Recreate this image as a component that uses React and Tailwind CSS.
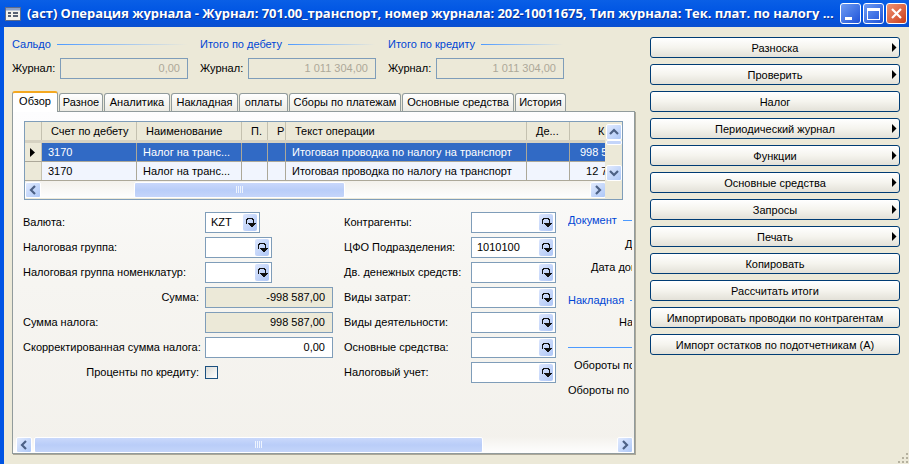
const font = { fontFamily: '"Liberation Sans", Arial, sans-serif' };

const Arrow = ({ dir }) => {
  const paths = {
    left: 'M9 3 L5 7 L9 11',
    right: 'M5 3 L9 7 L5 11',
    up: 'M3 9 L7 5 L11 9',
    down: 'M3 5 L7 9 L11 5',
  };
  return (
    <svg width="14" height="14" viewBox="0 0 14 14">
      <path d={paths[dir]} fill="none" stroke="#4d6185" strokeWidth="2.2" />
    </svg>
  );
};

const ScrollBtn = ({ dir }) => (
  <div className="flex h-[16px] w-[16px] shrink-0 items-center justify-center rounded-[2px] border border-white bg-gradient-to-br from-[#e1eafe] to-[#aec8f7]">
    <Arrow dir={dir} />
  </div>
);

const Grip = () => (
  <div className="flex gap-px">
    {[0, 1, 2, 3].map((i) => (
      <div key={i} className="h-[7px] w-px bg-[#eef4fe]" />
    ))}
  </div>
);

const HScroll = ({ leftGap, thumb, after, className = '' }) => (
  <div className={`flex h-[17px] shrink-0 items-center bg-gradient-to-b from-[#f3f1ec] to-[#fefefe] ${className}`}>
    <ScrollBtn dir="left" />
    <div className="h-full shrink-0" style={{ width: leftGap }} />
    <div
      className="flex h-[16px] shrink-0 items-center justify-center rounded-[2px] border border-white bg-gradient-to-b from-[#c9d8fb] via-[#b9cdf8] to-[#c4d5fa]"
      style={{ width: thumb }}
    >
      <Grip />
    </div>
    <div className="h-full shrink-0" style={{ width: after }} />
    <ScrollBtn dir="right" />
  </div>
);

const DropBtn = () => (
  <div className="flex h-[17px] w-[14px] shrink-0 items-center justify-center rounded-[2px] bg-gradient-to-br from-[#dce6fd] to-[#aec6f6]">
    <svg width="11" height="12" viewBox="0 0 11 12" shapeRendering="crispEdges">
      <path d="M1.5 7 V2.5 H2.5 V1.5 H7.5 V2.5 H8.5 V6" fill="none" stroke="#111" strokeWidth="1" />
      <path d="M3 6 H11 V7 H10 V8 H9 V9 H8 V10 H6 V9 H5 V8 H4 V7 H3 Z" fill="#111" />
    </svg>
  </div>
);

const Lookup = ({ value, w = 'w-[67px]' }) => (
  <div className={`flex h-[21px] ${w} items-center border border-[#7f9db9] bg-white pl-[5px] pr-[2px] text-black`}>
    <span className="flex-1">{value}</span>
    <DropBtn />
  </div>
);

const ReadOnly = ({ value, w, grey }) => (
  <div
    className={`flex h-[21px] ${w} items-center justify-end border border-[#7f9db9] bg-[#ece9d8] pr-[7px] ${grey ? 'text-[#aca899]' : 'text-black'}`}
  >
    {value}
  </div>
);

const Balance = ({ title, value }) => (
  <div className="w-[188px] shrink-0">
    <div className="flex h-[16px] items-center gap-[6px] pr-[13px] text-[#0046d5]">
      <span>{title}</span>
      <div className="h-px flex-1 bg-gradient-to-r from-[#4c9aff] to-[#ece9d8]" />
    </div>
    <div className="mt-[6px] flex items-center">
      <span className="w-[48px]">Журнал:</span>
      <ReadOnly value={value} w="w-[128px]" grey />
    </div>
  </div>
);

const Tab = ({ label, w, active }) =>
  active ? (
    <div
      className="z-10 -mb-px flex h-[21px] items-center justify-center rounded-t-[3px] border-x border-[#919b9c] border-t-[2px] border-t-[#f4a81f] bg-white pb-[3px]"
      style={{ width: w }}
    >
      {label}
    </div>
  ) : (
    <div
      className="mt-[2px] flex h-[18px] items-center justify-center rounded-t-[3px] border-x border-t border-[#919b9c] bg-gradient-to-b from-white to-[#ecebe4]"
      style={{ width: w }}
    >
      {label}
    </div>
  );

const tabs = [
  ['Обзор', 46, true],
  ['Разное', 44],
  ['Аналитика', 66],
  ['Накладная', 67],
  ['оплаты', 49],
  ['Сборы по платежам', 112],
  ['Основные средства', 112],
  ['История', 51],
];

const columns = [
  { title: 'Счет по дебету', w: 95, pad: 'pl-[9px]' },
  { title: 'Наименование', w: 105, pad: 'pl-[9px]' },
  { title: 'П.', w: 26, pad: 'pl-[9px]' },
  { title: 'Р', w: 18, pad: 'pl-[9px]' },
  { title: 'Текст операции', w: 241, pad: 'pl-[9px]' },
  { title: 'Де...', w: 43, pad: 'pl-[9px]' },
  { title: 'Кредит', w: 71, pad: 'pl-[28px]' },
];

const rows = [
  ['3170', 'Налог на транс...', '', '', 'Итоговая проводка по налогу на транспорт', '', '998 587,00'],
  ['3170', 'Налог на транс...', '', '', 'Итоговая проводка по налогу на транспорт', '', '12 717,00'],
];

const Journal = () => (
  <div className="mx-[11px] mt-[9px] flex h-[79px] shrink-0 border border-[#7f9db9] bg-[#ece9d8]">
    <div className="min-w-0 flex-1 overflow-hidden">
      <div className="flex h-[21px] border-b-[3px] border-[#d6d2c2]">
        <div className="w-[17px] shrink-0 border-r border-[#c4c1b0]" />
        {columns.map((c) => (
          <div
            key={c.title}
            className={`flex shrink-0 items-center overflow-hidden whitespace-nowrap border-r border-[#c4c1b0] ${c.pad}`}
            style={{ width: c.w }}
          >
            {c.title}
          </div>
        ))}
      </div>
      {rows.map((row, i) => (
        <div key={i} className="flex h-[19px] border-b border-[#aca899]">
          <div className="flex w-[17px] shrink-0 items-center justify-center border-r border-[#c4c1b0] bg-[#ece9d8]">
            {i === 0 && (
              <svg width="6" height="9" viewBox="0 0 6 9">
                <path d="M0 0 L5 4.5 L0 9 Z" fill="#000" />
              </svg>
            )}
          </div>
          {row.map((cell, j) => (
            <div
              key={j}
              className={`flex shrink-0 items-center overflow-hidden whitespace-nowrap border-r border-[#aca899] pl-[6px] pr-[5px] ${
                j === 6 ? 'justify-end' : ''
              } ${i === 0 ? 'bg-[#316ac5] text-white' : 'bg-[#f1f5fe] text-black'}`}
              style={{ width: columns[j].w }}
            >
              {cell}
            </div>
          ))}
        </div>
      ))}
      <HScroll leftGap={93} thumb={211} after={245} />
    </div>
    <div className="flex w-[17px] shrink-0 flex-col items-start pl-px pt-[2px]">
      <ScrollBtn dir="up" />
      <div className="h-[5px] w-[16px] rounded-[2px] border border-white bg-[#c4d5fa]" />
      <div className="flex-1" />
      <ScrollBtn dir="down" />
      <div className="h-[18px] shrink-0" />
    </div>
  </div>
);

const leftFields = [
  ['Валюта:', <Lookup value="KZT" w="w-[55px]" />],
  ['Налоговая группа:', <Lookup />],
  ['Налоговая группа номенклатур:', <Lookup />],
  ['Сумма:', <ReadOnly value="-998 587,00" w="w-[128px]" />, true],
  ['Сумма налога:', <ReadOnly value="998 587,00" w="w-[128px]" />],
];

const midFields = [
  ['Контрагенты:', ''],
  ['ЦФО Подразделения:', '1010100'],
  ['Дв. денежных средств:', ''],
  ['Виды затрат:', ''],
  ['Виды деятельности:', ''],
  ['Основные средства:', ''],
  ['Налоговый учет:', ''],
];

const Row = ({ label, right, w, children }) => (
  <div className="flex h-[21px] items-center">
    <span className={`shrink-0 whitespace-nowrap ${right ? 'pr-[6px] text-right' : 'pr-[4px]'}`} style={{ width: w }}>
      {label}
    </span>
    {children}
  </div>
);

const Section = ({ title }) => (
  <div className="flex h-[16px] items-center gap-[6px] text-[#0046d5]">
    <span className="shrink-0">{title}</span>
    <div className="h-px w-[20px] shrink-0 bg-[#4c9aff]" />
  </div>
);

const Fields = () => (
  <div className="flex min-h-0 flex-1 overflow-hidden pl-[10px] pr-[2px] pt-[12px]">
    <div className="flex w-[321px] shrink-0 flex-col gap-[4px]">
      {leftFields.map(([label, field, right]) => (
        <Row key={label} label={label} right={right} w={182}>
          {field}
        </Row>
      ))}
      <Row label="Скорректированная сумма налога:" right w={182}>
        <div className="flex h-[21px] w-[128px] items-center justify-end border border-[#7f9db9] bg-white pr-[7px]">
          0,00
        </div>
      </Row>
      <Row label="Проценты по кредиту:" right w={182}>
        <div className="h-[13px] w-[13px] border border-[#1c5180] bg-gradient-to-br from-[#dcdcd7] to-white" />
      </Row>
    </div>
    <div className="flex w-[224px] shrink-0 flex-col gap-[4px]">
      {midFields.map(([label, value]) => (
        <Row key={label} label={label} w={127}>
          <Lookup value={value} w="w-[85px]" />
        </Row>
      ))}
    </div>
    <div className="min-w-0 flex-1 overflow-hidden whitespace-nowrap">
      <Section title="Документ" />
      <div className="mt-[11px] h-[14px] pl-[57px]">Дата</div>
      <div className="mt-[9px] h-[14px] pl-[23px]">Дата документа</div>
      <div className="mt-[16px]">
        <Section title="Накладная" />
      </div>
      <div className="mt-[9px] h-[14px] pl-[51px]">Накладная</div>
      <div className="mt-[16px] h-px w-full bg-[#4c9aff]" />
      <div className="mt-[12px] h-[14px] pl-[6px]">Обороты по дебету</div>
      <div className="mt-[11px] h-[14px]">Обороты по кредиту</div>
    </div>
  </div>
);

const SideButton = ({ label, menu }) => (
  <div className="relative flex h-[21px] items-center justify-center rounded-[3px] border border-[#003c74] bg-gradient-to-b from-white via-[#f5f4ee] to-[#e3e1d8] pt-px">
    {label}
    {menu && (
      <svg className="absolute right-[2px] top-[5px]" width="5" height="9" viewBox="0 0 5 9">
        <path d="M0 0 L4.5 4.5 L0 9 Z" fill="#000" />
      </svg>
    )}
  </div>
);

const buttons = [
  ['Разноска', true],
  ['Проверить', true],
  ['Налог'],
  ['Периодический журнал', true],
  ['Функции', true],
  ['Основные средства', true],
  ['Запросы', true],
  ['Печать', true],
  ['Копировать'],
  ['Рассчитать итоги'],
  ['Импортировать проводки по контрагентам'],
  ['Импорт остатков по подотчетникам (А)'],
];

const TitleBar = () => (
  <div
    className="flex h-[27px] shrink-0 items-center bg-gradient-to-b from-[#0a5fe6] via-[#0054e3] to-[#0a4fd0] pl-[5px] pr-[2px] text-[13px] font-bold text-white"
    style={{ fontFamily: '"Open Sans", Arial, sans-serif' }}
  >
    <svg width="16" height="16" viewBox="0 0 16 16" className="shrink-0">
      <rect x="0.5" y="1.5" width="15" height="13" fill="#f3f1ec" stroke="#5d6b8a" />
      <rect x="1" y="2" width="14" height="2.5" fill="#8aa0c8" />
      <path d="M3 7 H6 M3 10 H6 M8 7 H13 M8 10 H13" stroke="#24304a" strokeWidth="1.5" />
    </svg>
    <span className="ml-[6px] flex-1 overflow-hidden whitespace-nowrap tracking-[-0.05px] [text-shadow:1px_1px_#0a2f8f]">
      (аст) Операция журнала - Журнал: 701.00_транспорт, номер журнала: 202-10011675, Тип журнала: Тек. плат. по налогу ...
    </span>
    <div className="ml-[4px] flex shrink-0 gap-[2px]">
      <div className="flex h-[21px] w-[21px] items-end rounded-[3px] border border-white bg-gradient-to-br from-[#6f9bf2] to-[#1f50d8] pb-[3px] pl-[4px]">
        <div className="h-[3px] w-[7px] bg-white" />
      </div>
      <div className="flex h-[21px] w-[21px] items-center justify-center rounded-[3px] border border-white bg-gradient-to-br from-[#6f9bf2] to-[#1f50d8]">
        <div className="h-[12px] w-[13px] border border-t-[3px] border-white" />
      </div>
      <div className="flex h-[21px] w-[21px] items-center justify-center rounded-[3px] border border-white bg-gradient-to-br from-[#ed9274] to-[#cc3a12]">
        <svg width="13" height="13" viewBox="0 0 13 13">
          <path d="M2 2 L11 11 M11 2 L2 11" stroke="#fff" strokeWidth="2.2" />
        </svg>
      </div>
    </div>
  </div>
);

const ResizeGrip = () => (
  <svg className="absolute bottom-0 right-0" width="12" height="12" viewBox="0 0 12 12">
    <path
      d="M9 1 h2 v2 h-2 z M5 5 h2 v2 h-2 z M9 5 h2 v2 h-2 z M1 9 h2 v2 h-2 z M5 9 h2 v2 h-2 z M9 9 h2 v2 h-2 z"
      fill="#b5b19f"
    />
  </svg>
);

export default function App() {
  return (
    <div className="flex h-[464px] w-[909px] flex-col overflow-hidden bg-[#0054e3] text-[11px] leading-none text-black" style={font}>
      <TitleBar />
      <div className="relative ml-[4px] flex min-h-0 flex-1 bg-[#ece9d8]">
        <div className="flex w-[634px] shrink-0 flex-col pl-[8px] pt-[9px]">
          <div className="flex">
            <Balance title="Сальдо" value="0,00" />
            <Balance title="Итого по дебету" value="1 011 304,00" />
            <Balance title="Итого по кредиту" value="1 011 304,00" />
          </div>
          <div className="mt-[12px] flex gap-px">
            {tabs.map(([label, w, active]) => (
              <Tab key={label} label={label} w={w} active={active} />
            ))}
          </div>
          <div className="flex h-[343px] w-[623px] flex-col border border-[#919b9c] bg-gradient-to-b from-[#fdfdfe] via-[#f6f5f1] to-[#f3f1ec] shadow-[1px_1px_0_#aca899]">
            <Journal />
            <Fields />
            <HScroll className="pl-[3px]" leftGap={2} thumb={449} after={134} />
          </div>
        </div>
        <div className="flex flex-1 flex-col gap-[6px] pl-[12px] pr-[9px] pt-[10px]">
          {buttons.map(([label, menu]) => (
            <SideButton key={label} label={label} menu={menu} />
          ))}
        </div>
        <ResizeGrip />
      </div>
    </div>
  );
}
